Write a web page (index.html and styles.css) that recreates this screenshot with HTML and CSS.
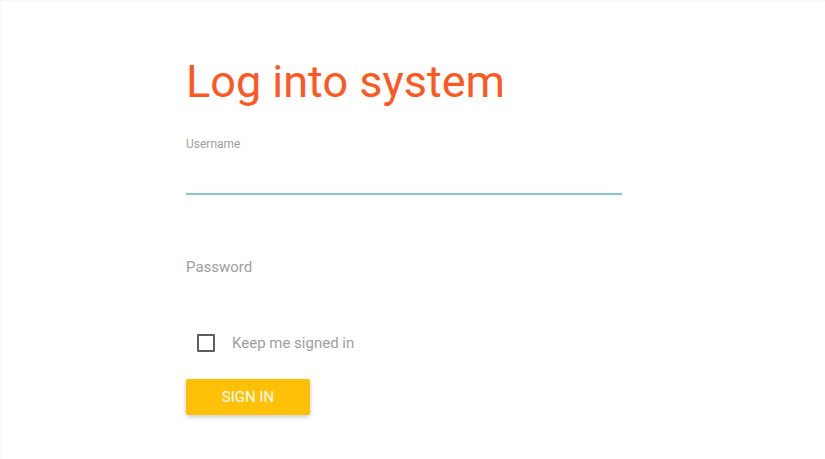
FILE: index.html
```html
<!DOCTYPE html>
<html>
<head>
<meta charset="utf-8">
<link rel="stylesheet" href="styles.css">
</head>
<body>
<div class="page">
  <form class="login">
    <h1 class="title">Log into system</h1>
    <div class="field field-active">
      <label class="field-label small">Username</label>
      <div class="field-input"></div>
    </div>
    <div class="field field-idle">
      <label class="field-label big">Password</label>
    </div>
    <label class="check">
      <span class="box"></span>
      <span class="check-text">Keep me signed in</span>
    </label>
    <button type="button" class="btn">SIGN IN</button>
  </form>
</div>
</body>
</html>
```
FILE: styles.css
```css
html, body {
  margin: 0;
  padding: 0;
  background: #fff;
}
body {
  font-family: Roboto, "Noto Sans", sans-serif;
  width: 825px;
  height: 459px;
  overflow: hidden;
}
.page {
  height: 459px;
  box-sizing: border-box;
  box-shadow: inset 1px 1px 2px rgba(0,0,0,0.04);
  padding-left: 186px;
}
.login {
  width: 436px;
  display: flex;
  flex-direction: column;
  align-items: flex-start;
}
.title {
  margin: 55px 0 0 0;
  font-size: 45px;
  line-height: 54px;
  font-weight: 400;
  color: #ff5722;
}
.field {
  width: 100%;
}
.field-active {
  margin-top: 28px;
}
.field-label {
  display: block;
  color: #9e9e9e;
}
.field-label.small {
  font-size: 12px;
  line-height: 14px;
}
.field-input {
  height: 42px;
  border-bottom: 2px solid #80cbc4;
}
.field-idle {
  margin-top: 63px;
}
.field-label.big {
  font-size: 15px;
  line-height: 18px;
}
.check {
  margin-top: 58px;
  display: flex;
  align-items: center;
  padding-left: 11px;
  cursor: pointer;
}
.box {
  width: 18px;
  height: 18px;
  box-sizing: border-box;
  border: 2px solid #5f5f5f;
  border-radius: 1px;
}
.check-text {
  margin-left: 17px;
  font-size: 15px;
  line-height: 18px;
  color: #9e9e9e;
}
.btn {
  margin-top: 27px;
  width: 124px;
  height: 36px;
  border: none;
  border-radius: 2px;
  background: #ffc107;
  color: #fff;
  font-family: Roboto, sans-serif;
  font-size: 15px;
  padding: 0;
  box-shadow: 0 2px 5px rgba(0,0,0,0.2);
}
```
